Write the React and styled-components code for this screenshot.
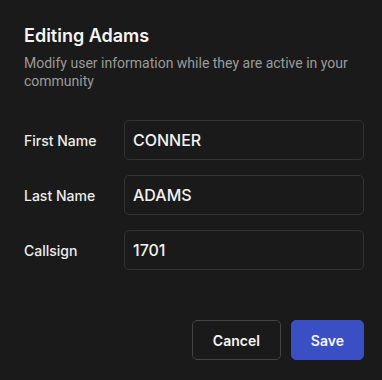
import React from "react";
import styled, { createGlobalStyle } from "styled-components";

const Global = createGlobalStyle`
  html, body { margin: 0; padding: 0; background: #1a1a1a; }
  body { font-family: Inter, "Noto Sans", sans-serif; -webkit-font-smoothing: antialiased; }
  * { box-sizing: border-box; }
`;

const Dialog = styled.div`
  width: 382px;
  height: 380px;
  background: #1a1a1a;
  padding: 25px 18px 20px 24px;
  display: flex;
  flex-direction: column;
`;

const Title = styled.h2`
  margin: 0;
  font-size: 18px;
  font-weight: 600;
  line-height: 22px;
  color: #f5f5f5;
`;

const Subtitle = styled.p`
  margin: 7px 0 0;
  font-family: Roboto, Inter, sans-serif;
  font-size: 14px;
  line-height: 18px;
  color: #9b9b9b;
`;

const Form = styled.div`
  margin-top: 30px;
  display: flex;
  flex-direction: column;
  gap: 15px;
`;

const Row = styled.label`
  display: grid;
  grid-template-columns: 100px 1fr;
  align-items: center;
`;

const Label = styled.span`
  font-size: 14px;
  font-weight: 500;
  color: #ededed;
`;

const Input = styled.input`
  height: 40px;
  width: 100%;
  background: #1a1a1a;
  border: 1px solid #333333;
  border-radius: 5px;
  padding: 0 8px;
  font-family: inherit;
  font-size: 16px;
  font-weight: 500;
  color: #f2f2f2;
  outline: none;
`;

const Footer = styled.div`
  margin-top: auto;
  display: flex;
  justify-content: flex-end;
  gap: 10px;
`;

const Button = styled.button`
  height: 40px;
  padding: 0 ${(p) => (p.$primary ? "19px" : "20px")};
  border-radius: 5px;
  font-family: inherit;
  font-size: 14px;
  font-weight: 600;
  color: #f5f5f5;
  background: ${(p) => (p.$primary ? "#3a4fc4" : "transparent")};
  border: 1px solid ${(p) => (p.$primary ? "#3a4fc4" : "#444444")};
  cursor: pointer;
`;

const fields = [
  { label: "First Name", value: "CONNER" },
  { label: "Last Name", value: "ADAMS" },
  { label: "Callsign", value: "1701" },
];

export default function App() {
  return (
    <>
      <Global />
      <Dialog>
        <Title>Editing Adams</Title>
        <Subtitle>Modify user information while they are active in your community</Subtitle>
        <Form>
          {fields.map((f) => (
            <Row key={f.label}>
              <Label>{f.label}</Label>
              <Input defaultValue={f.value} />
            </Row>
          ))}
        </Form>
        <Footer>
          <Button>Cancel</Button>
          <Button $primary>Save</Button>
        </Footer>
      </Dialog>
    </>
  );
}
